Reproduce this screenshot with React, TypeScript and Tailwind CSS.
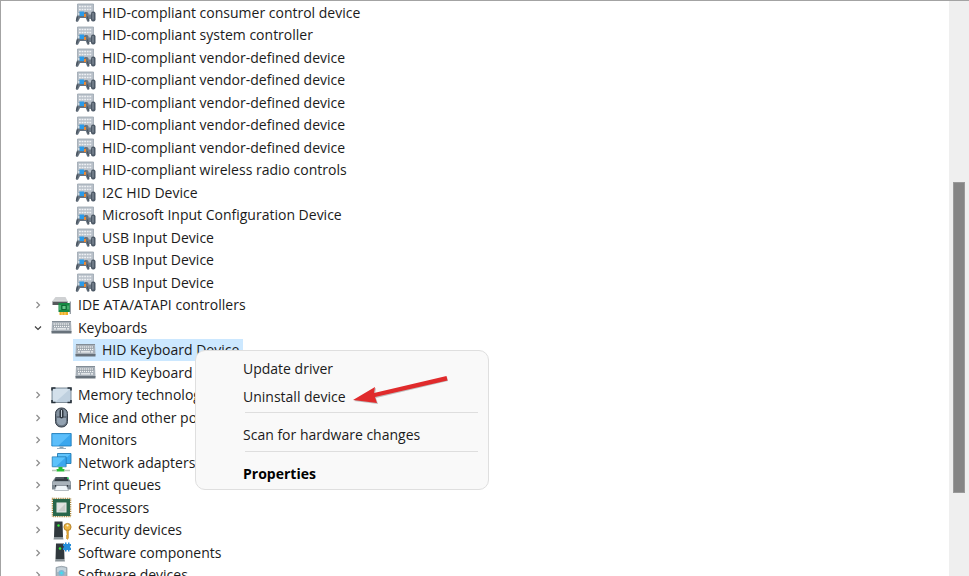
import React from "react";

type IconName =
  | "hid"
  | "ide"
  | "keyboard"
  | "memory"
  | "mouse"
  | "monitor"
  | "network"
  | "printer"
  | "cpu"
  | "security"
  | "component"
  | "software";

const ICONS: Record<IconName, React.ReactNode> = {
  hid: (
    <>
      <path d="M2.500 2h16v12h-16z" fill="#b9c1ca" stroke="#9aa4af" strokeWidth="0.8" />
      <path d="M4 4.500h13M4 7.500h13" stroke="#eef1f4" strokeWidth="1.500" strokeDasharray="1.800 .8" />
      <path d="M0.800 18.500L2.500 11.500C3.200 10 5 9.800 6.500 10.500h3c1.500-.7 3.300-.5 4 1l1 7c0 1.600-2 1.600-2.500.4L10.800 16H5l-1.700 3.200c-.8 1.200-2.700.8-2.500-.7z" fill="#66727f" />
      <path d="M2.500 14.500l-1 4M12.500 14.500l1 4" stroke="#46515c" strokeWidth="1.200" />
      <path d="M4.500 9.500h4.500v4.500H4.500z" fill="#2b9ae8" />
      <path d="M2.500 10.500h2v3h-2z" fill="#cfdae3" />
      <path d="M9 12h2v3H9z" fill="#e98a35" />
      <path d="M13.500 12.500h3V17h-3z" fill="#6f7b88" />
      <rect x="16" y="9.500" width="4.500" height="10" rx="2" fill="#4d5966" />
      <path d="M18 11v6.500" stroke="#909ba7" strokeWidth="1" />
    </>
  ),
  ide: (
    <>
      <path d="M4.500 2h10l2 4H1.500z" fill="#cfd1d3" />
      <path d="M1.500 6h15v4h-15z" fill="#56595c" />
      <path d="M1.500 6.200h15" stroke="#e9eaeb" strokeWidth="0.9" />
      <path d="M7.500 8h11.500v9H7.500z" fill="#168a43" />
      <path d="M19.300 6.500V19" stroke="#8d969d" strokeWidth="1.200" />
      <path d="M11 10.500h4v4h-4z" fill="#65c889" stroke="#0b592b" strokeWidth="0.8" />
      <path d="M17 10.500v4M9 10v5" stroke="#8adca4" strokeWidth="0.8" />
      <path d="M8.500 17h8.500v3H8.500z" fill="#efae25" />
      <path d="M11 17v3M14 17v3" stroke="#fff0b3" strokeWidth="0.6" />
    </>
  ),
  keyboard: (
    <>
      <path d="M1 4h19l.500 11H.500z" fill="#a9b1b9" />
      <path d="M.500 14h20v2.500H.500z" fill="#68727b" />
      <path d="M1 4.500h19" stroke="#838d96" strokeWidth="1" />
      <path d="M2.500 7h16M2.500 9.300h16" stroke="#7e8890" strokeWidth="1.600" />
      <path d="M2.500 7h16M3 9.300h15.500" stroke="#f5f7f8" strokeWidth="1.300" strokeDasharray="1.400 .6" />
      <path d="M3 11.800h2M6 11.800h9M16 11.800h2" stroke="#f5f7f8" strokeWidth="1.300" />
    </>
  ),
  memory: (
    <>
      <rect x="1" y="3" width="19" height="14.500" rx="1" fill="#bfd0df" stroke="#7f8d99" />
      <path d="M2 4h17L5 16.500H2z" fill="#d3e0eb" />
      <path d="M1 5.500V3h3.500M16.500 3H20v2.500M1 15v2.500h3.500M16.500 17.500H20V15" fill="none" stroke="#27313a" strokeWidth="1.600" />
    </>
  ),
  mouse: (
    <>
      <rect x="4.500" y="1" width="12" height="19" rx="5.500" fill="#66727f" stroke="#39434e" />
      <path d="M5.500 9V6.500c0-6 10-6 10 0V9z" fill="#8492a0" />
      <path d="M6 11v3.500c0 5 9 5 9 0V11z" fill="#93a2b1" />
      <rect x="8.500" y="2" width="4" height="9.500" rx="2" fill="#2e3740" />
      <path d="M10.500 3v7" stroke="#c5ced8" strokeWidth="1" />
    </>
  ),
  monitor: (
    <>
      <path d="M.800 3.500h19.400v12.500H.800z" fill="#3ba7ee" stroke="#1777b5" strokeWidth="0.8" />
      <path d="M1.500 4.200h18L7.500 15.500h-6z" fill="#5cbefa" />
      <path d="M8.500 16.500h4V18h-4z" fill="#8ca3b3" />
      <path d="M6 18.500h9" stroke="#9aafbe" />
    </>
  ),
  network: (
    <>
      <path d="M6.500 1.500h13.500v10H6.500z" fill="#3ba7ee" stroke="#1671aa" strokeWidth="0.8" />
      <path d="M7 2h12.500L9.500 11H7z" fill="#61c4fc" />
      <path d="M1.500 5h13.500v9.500H1.500z" fill="#3ba7ee" />
      <path d="M1.500 5h13.500L5 14.500H1.500z" fill="#5bc2fb" />
      <path d="M1.200 4.800h14v10h-14z" fill="none" stroke="#1671aa" strokeWidth="0.7" />
      <path d="M7.500 15h4v2h2v2.500h-8V17h2z" fill="#28bd36" />
      <path d="M1 18.500h4.500M13.500 18.500H19" stroke="#b9c7ba" strokeWidth="1.500" />
    </>
  ),
  printer: (
    <>
      <path d="M4.500 2h12l3.500 5v7.500H1V7z" fill="#7c8790" />
      <path d="M5 2h11l1.500 4H3.500z" fill="#343c43" />
      <path d="M1.500 6.500h18V10h-18z" fill="#a9b2ba" />
      <path d="M5 3h8" stroke="#66747e" />
      <path d="M16 3.200h2" stroke="#20e75a" strokeWidth="1.200" />
      <path d="M4 10h13v2H4z" fill="#303840" />
      <path d="M5.500 10.500h10l2 5h-14z" fill="#eff4f8" stroke="#8b969f" strokeWidth="0.6" />
    </>
  ),
  cpu: (
    <>
      <rect x="1.500" y="1.500" width="18" height="18" fill="none" stroke="#a8873e" strokeWidth="1.500" strokeDasharray="1 .8" />
      <rect x="2" y="2" width="17" height="17" fill="#28664b" />
      <rect x="6" y="6" width="9" height="9" fill="#c9cdcb" stroke="#e8ebe9" strokeWidth="1" />
      <path d="M6.500 6.500h8l-8 8z" fill="#e1e3e2" />
    </>
  ),
  security: (
    <>
      <path d="M3.500 1.500h8l.500 15.500H3z" fill="#30383d" />
      <path d="M3 17h9l.500 2.500h-10z" fill="#8b9499" />
      <circle cx="7.500" cy="5.500" r="1.200" fill="#34ef3a" />
      <circle cx="16.500" cy="7" r="3.600" fill="#eeb642" stroke="#a77520" strokeWidth="0.8" />
      <circle cx="16.500" cy="5.500" r="1.100" fill="#fff7d8" />
      <path d="M15.500 10h2v8l-1 1.500-1.500-1.500 1-1-1-1 1-1z" fill="#e5a62c" stroke="#a77520" strokeWidth="0.4" />
    </>
  ),
  component: (
    <>
      <path d="M5 1.500h8l.500 15.500h-9z" fill="#30383d" />
      <path d="M4.500 17h9l.500 2.500H4z" fill="#8b9499" />
      <circle cx="9" cy="6.500" r="1.300" fill="#34ef3a" />
      <path d="M12 2h2V.500h1.500V2h1.500V.500h1.500V2H20v2h-.800v1.800H20v2.200h-1.500v1.500H17V8h-1.500v1.500H14V8h-2V5.800h.800V4H12z" fill="#258dd8" />
    </>
  ),
  software: (
    <>
      <path d="M5 2.500q5.500-2.500 11 0V18H5z" fill="#a9b5be" stroke="#84919b" strokeWidth="0.6" />
      <path d="M6 3q4.500-1.500 9 0v4H6z" fill="#c4d1d9" />
      <circle cx="10.500" cy="8" r="3" fill="#79b9d7" />
      <circle cx="10.500" cy="8" r="1.200" fill="#39e3f2" />
    </>
  ),
};

function DeviceIcon({ name }: { name: IconName }) {
  return (
    <svg viewBox="0 0 21 21" className="size-[21px] shrink-0" aria-hidden="true">
      {ICONS[name]}
    </svg>
  );
}

function Chevron({ open }: { open: boolean }) {
  return (
    <svg viewBox="0 0 10 10" className="size-[10px]" fill="none" aria-hidden="true">
      {open ? (
        <path d="M2 3.500l3 3 3-3" stroke="#3f3f3f" strokeWidth="1.200" />
      ) : (
        <path d="M3.500 2l3 3-3 3" stroke="#8c8c8c" strokeWidth="1.200" />
      )}
    </svg>
  );
}

type Row = { label: string; icon: IconName; child?: boolean; open?: boolean; selected?: boolean };

const ROWS: Row[] = [
  ...[
    "HID-compliant consumer control device",
    "HID-compliant system controller",
    "HID-compliant vendor-defined device",
    "HID-compliant vendor-defined device",
    "HID-compliant vendor-defined device",
    "HID-compliant vendor-defined device",
    "HID-compliant vendor-defined device",
    "HID-compliant wireless radio controls",
    "I2C HID Device",
    "Microsoft Input Configuration Device",
    "USB Input Device",
    "USB Input Device",
    "USB Input Device",
  ].map((label): Row => ({ label, icon: "hid", child: true })),
  { label: "IDE ATA/ATAPI controllers", icon: "ide" },
  { label: "Keyboards", icon: "keyboard", open: true },
  { label: "HID Keyboard Device", icon: "keyboard", child: true, selected: true },
  { label: "HID Keyboard Device", icon: "keyboard", child: true },
  { label: "Memory technology devices", icon: "memory" },
  { label: "Mice and other pointing devices", icon: "mouse" },
  { label: "Monitors", icon: "monitor" },
  { label: "Network adapters", icon: "network" },
  { label: "Print queues", icon: "printer" },
  { label: "Processors", icon: "cpu" },
  { label: "Security devices", icon: "security" },
  { label: "Software components", icon: "component" },
  { label: "Software devices", icon: "software" },
];

function TreeRow({ row }: { row: Row }) {
  if (row.child) {
    return (
      <li role="treeitem" aria-level={2} aria-selected={!!row.selected} className="flex pl-[72px]">
        <span
          className={`flex items-center gap-[6px] pr-1 pl-[2px] ${row.selected ? "bg-[#cce8ff]" : ""}`}
        >
          <DeviceIcon name={row.icon} />
          {row.label}
        </span>
      </li>
    );
  }
  return (
    <li role="treeitem" aria-level={1} aria-expanded={!!row.open} className="flex items-center pl-8">
      <button type="button" aria-label={`Toggle ${row.label}`} className="mr-2">
        <Chevron open={!!row.open} />
      </button>
      <span className="flex items-center gap-[6px]">
        <DeviceIcon name={row.icon} />
        {row.label}
      </span>
    </li>
  );
}

const MENU_ITEM = "block h-7 w-full pl-[47px] text-left hover:bg-[#f0f0f0]";

function ContextMenu() {
  return (
    <div
      role="menu"
      className="absolute top-[349px] left-[194px] w-[294px] rounded-[10px] border border-[#dfdfdf] bg-[#f9f9f9] pt-1 pb-[1px]"
    >
      <button type="button" role="menuitem" className={MENU_ITEM}>Update driver</button>
      <button type="button" role="menuitem" className={MENU_ITEM}>Uninstall device</button>
      <hr className="mt-[1px] mr-[10px] mb-2 ml-[49px] border-[#dedede]" />
      <button type="button" role="menuitem" className={MENU_ITEM}>Scan for hardware changes</button>
      <hr className="mt-[2px] mr-[10px] mb-2 ml-[49px] border-[#dedede]" />
      <button type="button" role="menuitem" className={`${MENU_ITEM} font-bold text-black`}>Properties</button>
      <svg
        viewBox="0 0 98 32"
        className="pointer-events-none absolute top-[22px] left-[156px] h-8 w-[98px]"
        aria-hidden="true"
      >
        <path d="M2 28L24 15l-1 6L95 4l1 4L24 25l2 6z" fill="#777" opacity="0.45" />
        <path d="M1 27L23 14l-1 6L94.500 3l1 4.500L23 24l2 6z" fill="#e02b2c" />
      </svg>
    </div>
  );
}

export default function App() {
  return (
    <main className="relative flex h-screen overflow-hidden border-t border-l border-[#a3a3a3] bg-white font-['Open_Sans','Noto_Sans',sans-serif] text-sm text-[#1b1b1b]">
      <ul role="tree" aria-label="Devices" className="grid min-w-0 flex-1 auto-rows-[23px_22px] content-start whitespace-nowrap">
        {ROWS.map((row, i) => (
          <TreeRow key={i} row={row} />
        ))}
      </ul>
      <div className="flex w-5 shrink-0 flex-col bg-[#efefef] px-1" aria-hidden="true">
        <div className="grow-[182]" />
        <div className="grow-[310] border border-[#9a9a9a] bg-[#858585]" />
        <div className="grow-[83]" />
      </div>
      <ContextMenu />
    </main>
  );
}
